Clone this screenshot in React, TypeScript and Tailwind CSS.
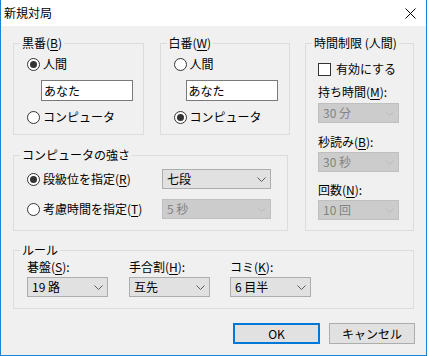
import React from "react";

const Chevron = ({ disabled }: { disabled?: boolean }) => (
  <svg width="9" height="5" viewBox="0 0 9 5" className="shrink-0">
    <path d="M0.5 0.5 L4.5 4.5 L8.5 0.5" fill="none" stroke={disabled ? "#bcbcbc" : "#5a5a5a"} strokeWidth="1" />
  </svg>
);

function Select({ value, className, disabled }: { value: string; className: string; disabled?: boolean }) {
  return (
    <div
      className={`${className} h-[20px] flex items-center justify-between pl-[4px] pr-[4px] border ${
        disabled ? "bg-[#cccccc] border-[#bfbfbf] text-[#838383]" : "bg-[#e1e1e1] border-[#adadad] text-black"
      }`}
    >
      <span className="leading-[16px] whitespace-pre">{value}</span>
      <Chevron disabled={disabled} />
    </div>
  );
}

function Radio({ checked, children }: { checked?: boolean; children: React.ReactNode }) {
  return (
    <div className="flex items-center h-[16px]">
      <span className="w-[13px] h-[13px] rounded-full border border-[#333333] bg-white flex items-center justify-center shrink-0">
        {checked && <span className="w-[7px] h-[7px] rounded-full bg-[#333333]" />}
      </span>
      <span className="ml-[3px] leading-[16px] whitespace-nowrap">{children}</span>
    </div>
  );
}

function Group({ label, className, children }: { label: React.ReactNode; className: string; children: React.ReactNode }) {
  return (
    <div className={`relative border border-[#dcdcdc] ${className}`}>
      <span className="absolute -top-[9px] left-[6px] px-[2px] bg-[#f0f0f0] leading-[16px] whitespace-nowrap">{label}</span>
      {children}
    </div>
  );
}

const U = ({ children }: { children: React.ReactNode }) => <span className="underline underline-offset-2">{children}</span>;

export default function App() {
  return (
    <div className="w-[427px] h-[356px] flex flex-col border-x border-b border-[#1883d7] bg-[#f0f0f0] text-[12px] text-black font-['Noto_Sans_CJK_JP',sans-serif] overflow-hidden">
      <div className="h-[26px] bg-white flex items-center justify-between pl-[3px] pr-[10px] shrink-0">
        <span className="leading-[16px]">新規対局</span>
        <svg width="11" height="11" viewBox="0 0 11 11">
          <path d="M0.5 0.5 L10.5 10.5 M10.5 0.5 L0.5 10.5" stroke="#000" strokeWidth="1" fill="none" />
        </svg>
      </div>
      <div className="pl-[12px] pt-[17px]">
        <div className="flex">
          <div className="w-[277px] flex flex-col">
            <div className="flex gap-[16px]">
              <Group label={<>黒番(<U>B</U>)</>} className="w-[131px] h-[92px] pt-[12px] pl-[13px]">
                <Radio checked>人間</Radio>
                <div className="mt-[8px] ml-[14px] w-[92px] h-[21px] border border-[#7a7a7a] bg-white pl-[2px] flex items-center">
                  <span className="leading-[16px]">あなた</span>
                </div>
                <div className="mt-[8px]">
                  <Radio>コンピュータ</Radio>
                </div>
              </Group>
              <Group label={<>白番(<U>W</U>)</>} className="w-[131px] h-[92px] pt-[12px] pl-[13px]">
                <Radio>人間</Radio>
                <div className="mt-[8px] ml-[12px] w-[92px] h-[21px] border border-[#7a7a7a] bg-white pl-[2px] flex items-center">
                  <span className="leading-[16px]">あなた</span>
                </div>
                <div className="mt-[8px]">
                  <Radio checked>コンピュータ</Radio>
                </div>
              </Group>
            </div>
            <Group label="コンピュータの強さ" className="mt-[20px] w-[275px] h-[76px] pt-[13px] pl-[13px]">
              <div className="grid grid-cols-[135px_109px] gap-y-[10px] items-center">
                <Radio checked>段級位を指定(<U>R</U>)</Radio>
                <Select value="七段" className="w-[109px]" />
                <Radio>考慮時間を指定(<U>T</U>)</Radio>
                <Select value="5 秒" className="w-[109px]" disabled />
              </div>
            </Group>
          </div>
          <Group label="時間制限 (人間)" className="ml-[15px] w-[109px] h-[188px] pt-[17px] pl-[12px]">
            <div className="flex items-center h-[16px]">
              <span className="w-[13px] h-[13px] border border-[#333333] bg-white shrink-0" />
              <span className="ml-[5px] leading-[16px]">有効にする</span>
            </div>
            <div className="mt-[7px] leading-[16px]">持ち時間(<U>M</U>):</div>
            <Select value="30 分" className="mt-[3px] w-[81px]" disabled />
            <div className="mt-[11px] leading-[16px]">秒読み(<U>B</U>):</div>
            <Select value="30 秒" className="mt-[2px] w-[81px]" disabled />
            <div className="mt-[10px] leading-[16px]">回数(<U>N</U>):</div>
            <Select value="10 回" className="mt-[2px] w-[81px]" disabled />
          </Group>
        </div>
        <Group label="ルール" className="mt-[19px] w-[401px] h-[59px] pt-[8px] pl-[13px]">
          <div className="grid grid-cols-[102px_101px_81px]">
            <div className="leading-[16px]">碁盤(<U>S</U>):</div>
            <div className="leading-[16px]">手合割(<U>H</U>):</div>
            <div className="leading-[16px]">コミ(<U>K</U>):</div>
            <Select value="19 路" className="mt-[2px] w-[81px]" />
            <Select value="互先" className="mt-[2px] w-[81px]" />
            <Select value="6 目半" className="mt-[2px] w-[81px]" />
          </div>
        </Group>
        <div className="mt-[14px] pl-[220px] flex gap-[9px]">
          <div className="w-[87px] h-[21px] border-2 border-[#0078d7] bg-[#e1e1e1] flex items-center justify-center">
            <span className="leading-[16px]">OK</span>
          </div>
          <div className="w-[86px] h-[21px] border border-[#adadad] bg-[#e1e1e1] flex items-center justify-center">
            <span className="leading-[16px]">キャンセル</span>
          </div>
        </div>
      </div>
    </div>
  );
}
